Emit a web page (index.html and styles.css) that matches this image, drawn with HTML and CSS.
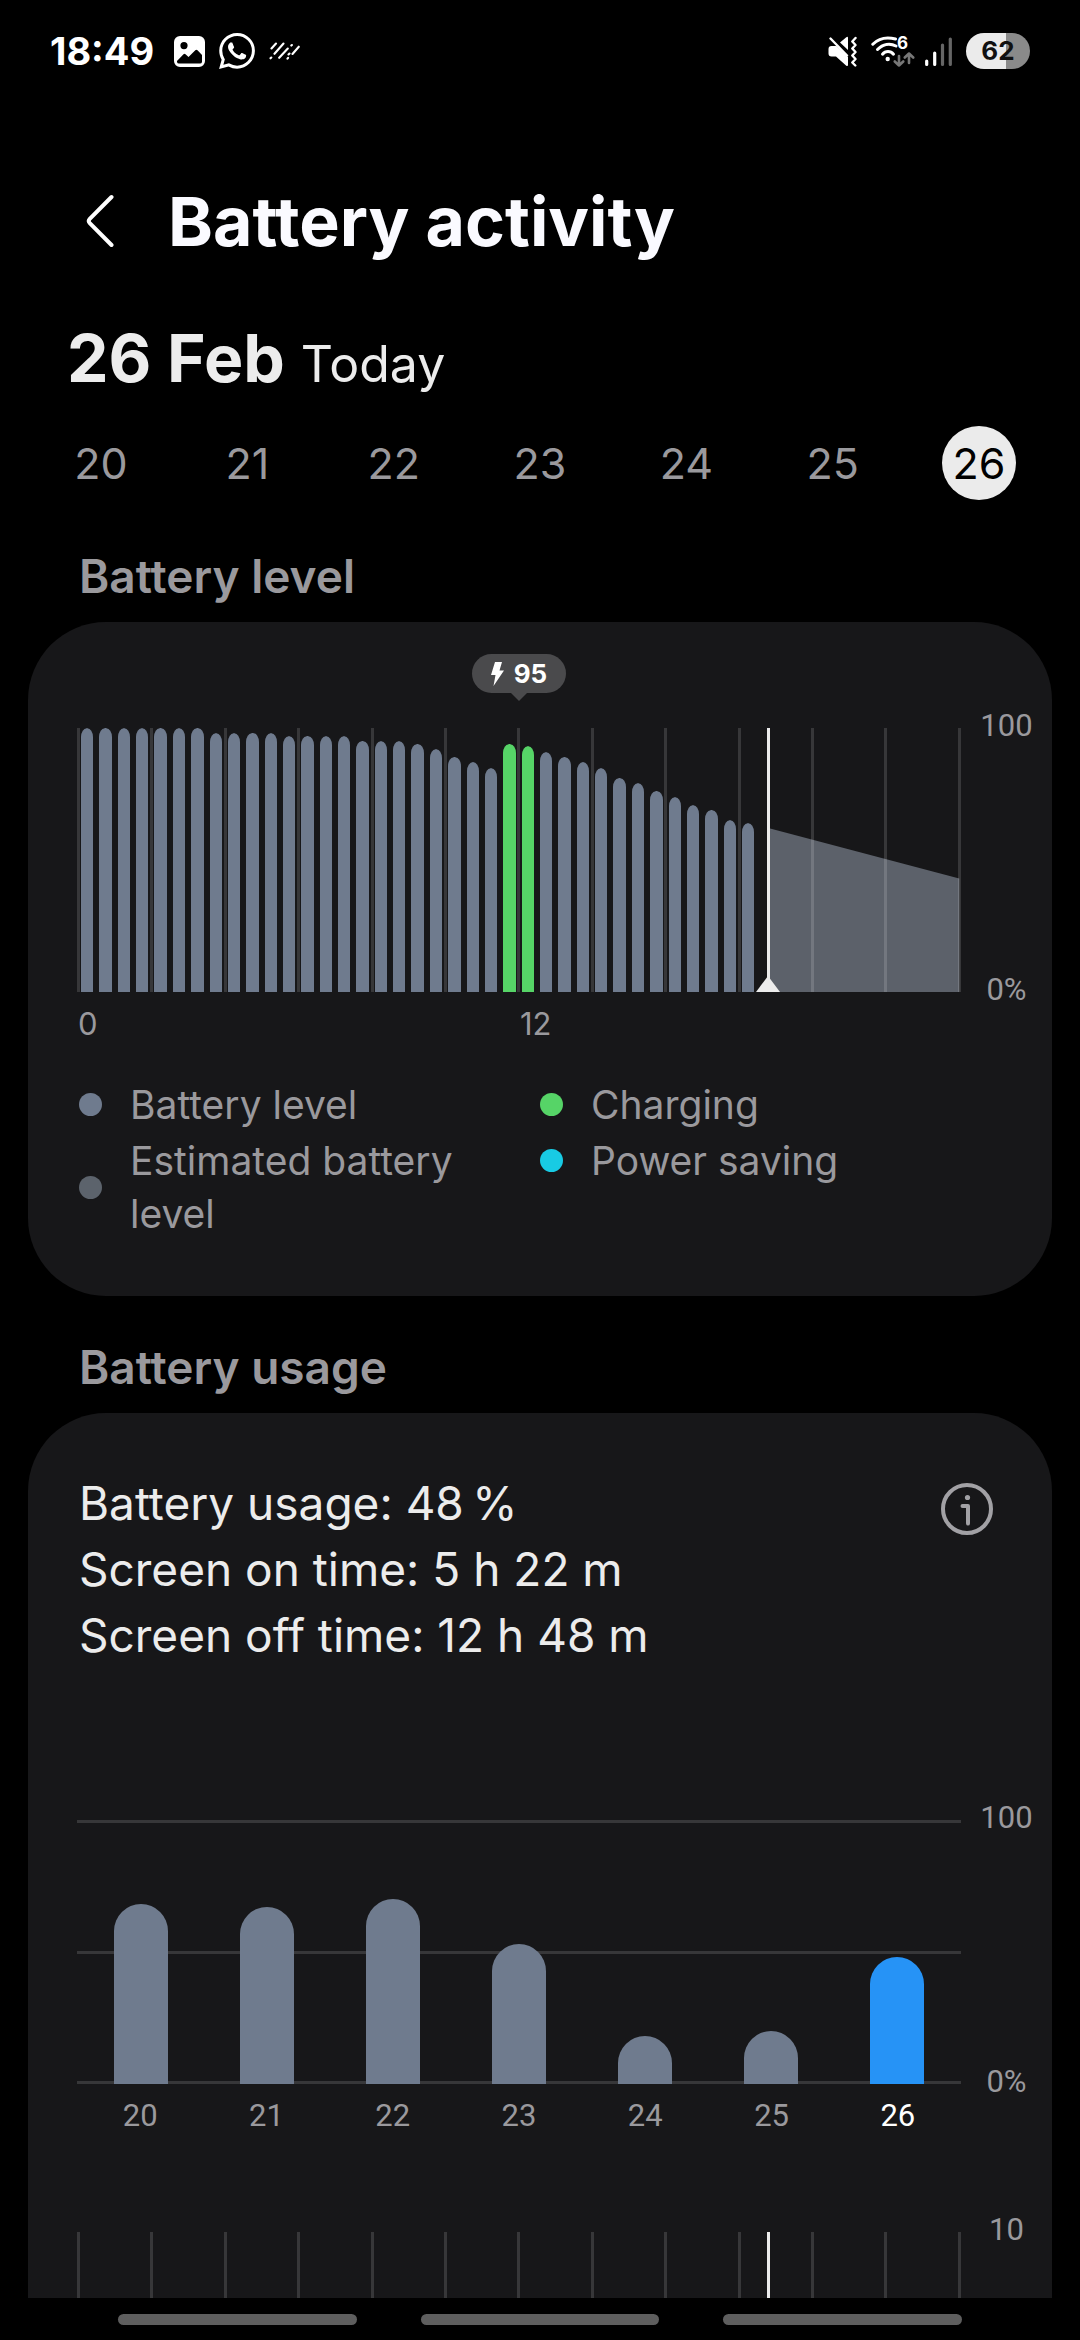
FILE: index.html
```
<!DOCTYPE html>
<html lang="en">
<head>
    <meta charset="UTF-8">
    <meta name="viewport" content="width=device-width, initial-scale=1.0">
    <title>Battery activity</title>
    <link rel="stylesheet" href="styles.css">
</head>
<body>
    <div class="status-bar">
        <div class="status-left">
            <span class="clock">18:49</span>
            <svg class="icon-photo" width="31" height="31" viewBox="0 0 31 31">
                <path fill="#fff" fill-rule="evenodd" d="M6 0h19a6 6 0 0 1 6 6v19a6 6 0 0 1-6 6H6a6 6 0 0 1-6-6V6a6 6 0 0 1 6-6zM10 6a3.6 3.6 0 1 0 0 7.200a3.600 3.600 0 0 0 0-7.200zM3 25v1a2 2 0 0 0 2 1.500h21a2 2 0 0 0 2-1.500v-7l-4.500-4.700a1.500 1.500 0 0 0-2.200 0L14.500 21l-3-2.700a1.500 1.500 0 0 0-2 0z"/>
            </svg>
            <svg width="36" height="36" viewBox="0 0 24 24">
                <path fill="#fff" d="M17.472 14.382c-.297-.149-1.758-.867-2.03-.967-.273-.099-.471-.148-.67.15-.197.297-.767.966-.94 1.164-.173.199-.347.223-.644.075-.297-.15-1.255-.463-2.39-1.475-.883-.788-1.48-1.761-1.653-2.059-.173-.297-.018-.458.13-.606.134-.133.298-.347.446-.52.149-.174.198-.298.298-.497.099-.198.05-.371-.025-.52-.075-.149-.669-1.612-.916-2.207-.242-.579-.487-.5-.669-.51-.173-.008-.371-.01-.57-.01-.198 0-.52.074-.792.372-.272.297-1.04 1.016-1.04 2.479 0 1.462 1.065 2.875 1.213 3.074.149.198 2.096 3.2 5.077 4.487.709.306 1.262.489 1.694.625.712.227 1.36.195 1.871.118.571-.085 1.758-.719 2.006-1.413.248-.694.248-1.289.173-1.413-.074-.124-.272-.198-.57-.347m-5.421 7.403h-.004a9.87 9.87 0 01-5.031-1.378l-.361-.214-3.741.982.998-3.648-.235-.374a9.86 9.86 0 01-1.51-5.26c.001-5.45 4.436-9.884 9.888-9.884 2.64 0 5.122 1.03 6.988 2.898a9.825 9.825 0 012.893 6.994c-.003 5.45-4.437 9.884-9.885 9.884m8.413-18.297A11.815 11.815 0 0012.05 0C5.495 0 .16 5.335.157 11.892c0 2.096.547 4.142 1.588 5.945L.057 24l6.305-1.654a11.882 11.882 0 005.683 1.448h.005c6.554 0 11.89-5.335 11.893-11.893a11.821 11.821 0 00-3.48-8.413Z"/>
            </svg>
            <svg width="31" height="18" viewBox="0 0 31 18" fill="none" stroke="#fff" stroke-width="2.100" stroke-linecap="round">
                <path d="M2.500 6.500l4.500-5M5.500 11.800L14.500 1.500M1.500 16.300l.8-.8M10.200 15.800l8.600-9.300M22.300 3.600l.6-.6M18.500 16.700l.6-.8M19.500 12.500l1-1M23.500 12l6.300-7.300"/>
            </svg>
        </div>
        <div class="status-right">
            <svg class="icon-mute" width="29" height="32" viewBox="0 0 29 32">
                <path fill="#fff" d="M8.500 11H3.500Q.5 11 .5 14v4.500q0 3 3 3H8l10 9q2 1.500 2-.8V22zM20 3v12l-8-7.500 6-5Q20 1 20 3z"/>
                <path fill="none" stroke="#fff" stroke-width="2.400" stroke-linecap="round" stroke-linejoin="round" d="M2.500 3.500L19 20.500M27.500 3l-3.200 3.500 3.200 3.500-3.200 3.500 3.200 3.500-3.200 3.500 3.200 3.500-3.200 3.500 3 3"/>
            </svg>
            <svg class="icon-wifi" width="44" height="44" viewBox="0 -6 44 44">
                <g fill="none" stroke="#fff" stroke-width="3" stroke-linecap="round">
                    <path d="M1.800 9.200C8 3 16 1.700 24.500 4"/>
                    <path d="M6.500 14.500C12 9 19 8 25 11"/>
                    <path d="M11.500 19.200c3-3.600 8-3.600 11 0"/>
                </g>
                <circle cx="16.700" cy="24" r="2.200" fill="#fff"/>
                <text class="wifi-gen" x="26" y="14">6</text>
                <path fill="none" stroke="#777" stroke-width="2.600" stroke-linecap="round" stroke-linejoin="round" d="M28 21v9.500M23.800 26.500l4.200 4 4.200-4M38 28v-9.500M33.800 22.500l4.200-4 4.200 4"/>
            </svg>
            <svg class="icon-signal" width="27" height="31" viewBox="0 0 27 31" stroke-width="3.200" stroke-linecap="round">
                <path stroke="#fff" d="M1.700 25v3.500M9.700 17v11.500"/>
                <path stroke="#666" d="M17.500 9v19.500M25.300 3v25.500"/>
            </svg>
            <span class="battery">62</span>
        </div>
    </div>

    <main class="content">
        <header class="header">
            <button class="back" aria-label="Back">
                <svg width="28" height="54" viewBox="0 0 28 54" fill="none" stroke="#fff" stroke-width="4" stroke-linecap="round" stroke-linejoin="round">
                    <path d="M25.500 3L3.500 25.200q-1.500 1.800 0 3.600L25.500 51"/>
                </svg>
            </button>
            <h1>Battery activity</h1>
        </header>

        <p class="date"><strong>26 Feb</strong><span>Today</span></p>

        <div class="days">
            <button class="day">20</button>
            <button class="day">21</button>
            <button class="day">22</button>
            <button class="day">23</button>
            <button class="day">24</button>
            <button class="day">25</button>
            <button class="day selected">26</button>
        </div>

        <h2>Battery level</h2>
        <section class="card level-card">
            <div class="chart">
                <div class="tooltip-row">
                    <div class="tooltip">
                        <svg width="13" height="24" viewBox="0 0 13 24"><path fill="#fff" d="M4 0h7L8.500 8.500H13L2.500 24l2-11H0z"/></svg>
                        95
                    </div>
                </div>
                <div class="plot">
                    <svg class="estimate" viewBox="0 0 100 100" preserveAspectRatio="none">
                        <polygon points="78.3,38 99.8,57 99.8,100 78.3,100"/>
                    </svg>
                    <div class="hour-lines"></div>
                    <div class="level-bars" id="levelBars"></div>
                    <div class="now with-foot"></div>
                </div>
                <div class="axis"><span>100</span><span>0%</span></div>
                <div class="hours"><span>0</span><span>12</span></div>
            </div>
            <ul class="legend">
                <li><i class="dot level"></i>Battery level</li>
                <li><i class="dot charging"></i>Charging</li>
                <li><i class="dot estimated"></i>Estimated battery level</li>
                <li><i class="dot saving"></i>Power saving</li>
            </ul>
        </section>

        <h2>Battery usage</h2>
        <section class="card usage-card">
            <div class="summary">
                <div>
                    <p>Battery usage: 48&thinsp;%</p>
                    <p>Screen on time: 5 h 22 m</p>
                    <p>Screen off time: 12 h 48 m</p>
                </div>
                <button class="info" aria-label="Information">
                    <svg width="52" height="52" viewBox="0 0 52 52" fill="none" stroke="#a2a1a5" stroke-width="4" stroke-linecap="round" stroke-linejoin="round">
                        <circle cx="26" cy="26" r="24"/>
                        <path d="M21.500 23H27v17.500"/>
                        <circle cx="26.500" cy="14.500" r="2.600" fill="#a2a1a5" stroke="none"/>
                    </svg>
                </button>
            </div>
            <div class="chart">
                <div class="plot">
                    <div class="percent-lines"><i></i><i></i><i></i></div>
                    <div class="usage-bars" id="usageBars"></div>
                </div>
                <div class="axis"><span>100</span><span>0%</span></div>
                <div class="dates" id="usageDates"></div>
            </div>
            <div class="chart hourly">
                <div class="plot">
                    <div class="hour-lines"></div>
                    <div class="now"></div>
                </div>
                <div class="axis"><span>10</span></div>
            </div>
        </section>
    </main>

    <nav class="nav-bar">
        <button aria-label="Recents"></button>
        <button aria-label="Home"></button>
        <button aria-label="Back"></button>
    </nav>

    <script>
        // Battery level, one value per half hour
        const levels = [100, 100, 100, 100, 100, 100, 100, 98, 98, 98, 98, 97, 97, 97, 97, 95, 95, 95, 94,
            92, 89, 87, 85, 94, 93, 91, 89, 87, 85, 81, 79, 76, 74, 71, 69, 65, 64];
        const charging = [23, 24];

        const usage = { 20: 68, 21: 67, 22: 70, 23: 53, 24: 18, 25: 20, 26: 48 };
        const today = '26';

        // One line every two hours
        document.querySelectorAll('.hour-lines').forEach(el => {
            el.innerHTML = '<i></i>'.repeat(13);
        });

        document.getElementById('levelBars').innerHTML = levels.map((level, i) => {
            const cls = charging.includes(i) ? 'bar charging' : 'bar';
            return `<div class="${cls}" style="height: ${level}%"></div>`;
        }).join('');

        let bars = '';
        let dates = '';
        for (const day in usage) {
            const cls = day === today ? ' today' : '';
            bars += `<div class="bar${cls}" style="height: ${usage[day]}%"></div>`;
            dates += `<span class="${cls}">${day}</span>`;
        }
        document.getElementById('usageBars').innerHTML = bars;
        document.getElementById('usageDates').innerHTML = dates;
    </script>
</body>
</html>
```
FILE: styles.css
```
* {
    box-sizing: border-box;
}

body {
    display: flex;
    flex-direction: column;
    height: 100vh;
    margin: 0;
    background-color: #000;
    color: #ececec;
    font-family: Inter, "Liberation Sans", sans-serif;
}

h1, h2, p, ul {
    margin: 0;
    padding: 0;
}

button {
    padding: 0;
    border: none;
    background: none;
    color: inherit;
    font: inherit;
    cursor: pointer;
}

svg {
    display: block;
    flex: none;
}

/* Status bar */
.status-bar {
    display: flex;
    justify-content: space-between;
    align-items: center;
    flex: none;
    height: 102px;
    padding: 0 50px;
}

.status-left,
.status-right {
    display: flex;
    align-items: center;
    gap: 14px;
}

.clock {
    margin-right: 6px;
    color: #fff;
    font-size: 38px;
    font-weight: 700;
}

.icon-signal {
    margin-left: -4px;
}

.wifi-gen {
    fill: #fff;
    font-size: 17px;
    font-weight: 700;
}

.battery {
    width: 64px;
    border-radius: 18px;
    background: linear-gradient(to right, #ebebeb 62%, #8a8a8a 62%);
    color: #111;
    font-size: 26px;
    font-weight: 700;
    line-height: 36px;
    text-align: center;
}

.content {
    display: flex;
    flex-direction: column;
    flex: 1;
    min-height: 0;
    overflow: hidden;
    padding: 77px 28px 0;
}

.header {
    display: flex;
    align-items: center;
    flex: none;
    gap: 54px;
    padding-left: 58px;
}

h1 {
    color: #fafaff;
    font-size: 68px;
    font-weight: 700;
    line-height: 84px;
}

.date {
    display: flex;
    align-items: baseline;
    flex: none;
    gap: 16px;
    margin-top: 55px;
    padding-left: 39px;
    font-size: 50px;
    line-height: 80px;
}

.date strong {
    font-size: 66px;
}

.days {
    display: flex;
    justify-content: space-between;
    flex: none;
    margin: 22px 0 5px;
    padding: 0 36px;
}

.day {
    width: 74px;
    height: 74px;
    border-radius: 50%;
    color: #9a999d;
    font-size: 43px;
}

.day.selected {
    background-color: #ebebeb;
    color: #000;
}

h2 {
    flex: none;
    margin: 43px 0 18px;
    padding-left: 51px;
    color: #9a999d;
    font-size: 46px;
    font-weight: 600;
    line-height: 56px;
}

.card {
    flex: none;
    border-radius: 78px;
    background-color: #171719;
}

.level-card {
    padding: 32px 0 56px;
}

.usage-card {
    padding: 57px 0;
}

/* Charts: plot on the left, axis labels on the right */
.chart {
    display: grid;
    grid-template-columns: 1fr 91px;
    padding-left: 49px;
}

.plot {
    display: grid;
    grid-column: 1;
    grid-template: 264px / 1fr;
    position: relative;
}

.plot > * {
    grid-area: 1 / 1;
    min-width: 0;
}

.axis {
    display: flex;
    flex-direction: column;
    justify-content: space-between;
    margin: -18px 0 -14px;
    color: #9a999d;
    font-family: Roboto, sans-serif;
    font-size: 31px;
    line-height: 32px;
    text-align: center;
}

.hour-lines {
    display: flex;
    justify-content: space-between;
}

.hour-lines i {
    width: 3px;
    background-color: rgba(255, 255, 255, 0.14);
}

.percent-lines {
    display: flex;
    flex-direction: column;
    justify-content: space-between;
}

.percent-lines i {
    height: 3px;
    background-color: #373739;
}

.level-bars,
.usage-bars {
    display: flex;
    align-items: flex-end;
    padding: 0 1px;
}

.level-bars .bar {
    flex: none;
    width: calc(100% / 48);
    border: solid transparent;
    border-width: 0 3px;
    border-radius: 9px 9px 0 0;
    background: #6f7b8e padding-box;
}

.level-bars .charging {
    background-color: #56d467;
}

.usage-bars {
    justify-content: space-around;
}

.usage-bars .bar {
    width: 54px;
    border-radius: 27px 27px 0 0;
    background-color: #6f7b8e;
}

.usage-bars .today {
    background-color: #2693f6;
}

.estimate {
    width: 100%;
    height: 100%;
    fill: #5c616a;
}

/* Current time marker */
.now {
    position: absolute;
    top: 0;
    bottom: 0;
    left: 78%;
    width: 3px;
    background-color: #ececec;
}

.with-foot::after {
    content: "";
    position: absolute;
    bottom: 0;
    left: -11px;
    border: solid transparent;
    border-width: 0 12px 16px;
    border-bottom-color: #ececec;
}

.tooltip-row {
    display: flex;
    justify-content: center;
    grid-column: 1 / 2;
    margin-bottom: 35px;
}

.tooltip {
    display: flex;
    justify-content: center;
    align-items: center;
    gap: 10px;
    position: relative;
    width: 94px;
    height: 39px;
    border-radius: 20px;
    background-color: #4a4a4c;
    color: #fff;
    font-size: 26px;
    font-weight: 700;
}

.tooltip::after {
    content: "";
    position: absolute;
    top: 100%;
    left: 50%;
    margin-left: -8px;
    border: solid transparent;
    border-width: 8px 8px 0;
    border-top-color: #4a4a4c;
}

.level-card .plot,
.level-card .axis {
    grid-row: 2;
}

.hours,
.dates {
    display: grid;
    grid-auto-flow: column;
    grid-auto-columns: 1fr;
    grid-column: 1;
    margin-top: 12px;
    color: #9a999d;
    font-size: 31px;
    line-height: 40px;
}

.hours span {
    padding-left: 1px;
}

.dates {
    font-family: Roboto, sans-serif;
    text-align: center;
}

.dates .today {
    color: #fff;
}

.legend {
    display: grid;
    grid-template-columns: 1fr 1fr;
    align-items: start;
    row-gap: 3px;
    margin-top: 34px;
    padding: 0 51px;
    list-style: none;
    color: #9a999d;
    font-size: 39px;
    line-height: 53px;
}

.legend li {
    display: flex;
    align-items: center;
    gap: 28px;
}

.dot {
    flex: none;
    width: 23px;
    height: 23px;
    border-radius: 50%;
}

.dot.level {
    background-color: #6f7b8e;
}

.dot.charging {
    background-color: #56d467;
}

.dot.estimated {
    background-color: #5c636c;
}

.dot.saving {
    background-color: #18cbe4;
}

/* Usage card */
.summary {
    display: flex;
    justify-content: space-between;
    align-items: flex-start;
    margin-bottom: 152px;
    padding: 0 59px 0 51px;
    font-size: 46px;
    line-height: 66px;
}

.info {
    margin-top: 13px;
}

.hourly {
    margin-top: 96px;
}

/* Navigation bar */
.nav-bar {
    display: flex;
    align-items: center;
    flex: none;
    gap: 64px;
    height: 42px;
    padding: 0 118px;
}

.nav-bar button {
    flex: 1;
    height: 11px;
    border-radius: 6px;
    background-color: #5e5e5e;
}
```
